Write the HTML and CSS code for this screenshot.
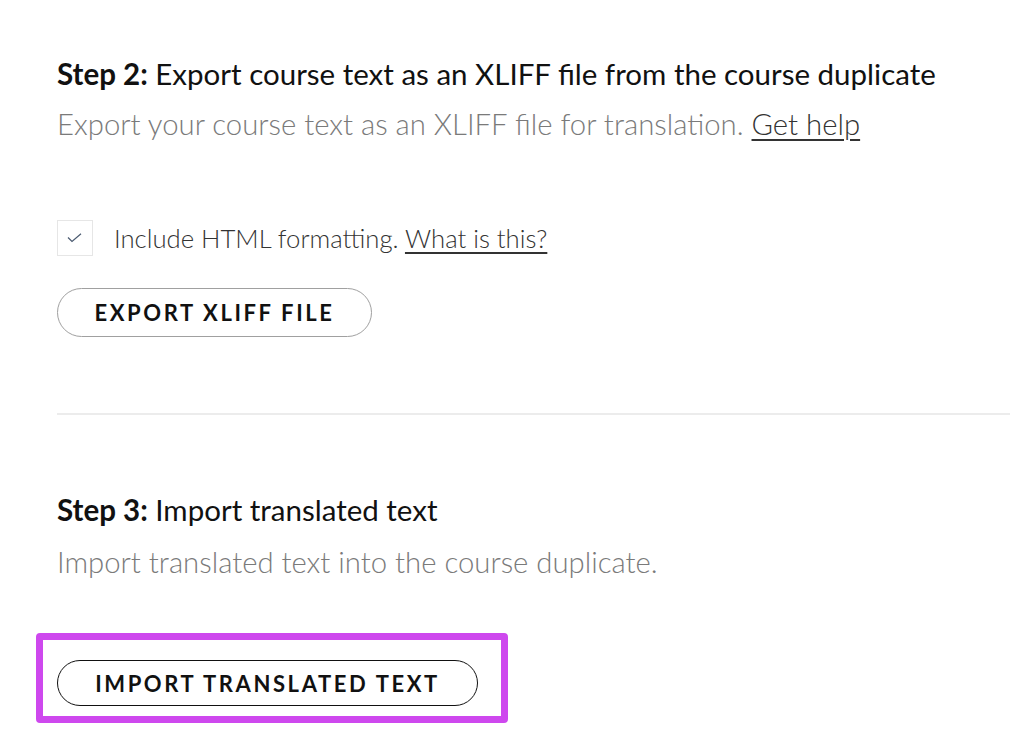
FILE: index.html
```html
<!DOCTYPE html>
<html>
<head>
    <link rel="stylesheet" href="styles.css">
</head>
<body>
    <div class="page">
        <section class="step">
            <h2 class="step-title"><strong>Step 2:</strong> Export course text as an XLIFF file from the course duplicate</h2>
            <p class="step-desc">Export your course text as an XLIFF file for translation. <a href="#" class="help-link">Get help</a></p>

            <label class="check-row">
                <span class="check-box">
                    <svg width="16" height="10" viewBox="0 0 16 10">
                        <polyline points="1,4.5 5,8.5 14,0.8" fill="none" stroke="#4a5a70" stroke-width="1.2"/>
                    </svg>
                </span>
                <span class="check-label">Include HTML formatting. <a href="#" class="help-link">What is this?</a></span>
            </label>

            <button class="pill-btn pill-btn-light">EXPORT XLIFF FILE</button>
        </section>

        <hr class="divider">

        <section class="step step-import">
            <h2 class="step-title"><strong>Step 3:</strong> Import translated text</h2>
            <p class="step-desc">Import translated text into the course duplicate.</p>

            <div class="highlight">
                <button class="pill-btn pill-btn-dark">IMPORT TRANSLATED TEXT</button>
            </div>
        </section>
    </div>
</body>
</html>
```

FILE: styles.css
```css
body {
    margin: 0;
    background: #ffffff;
    font-family: Lato, "Open Sans", sans-serif;
    color: #111;
}

.page {
    padding: 55px 0 0 57px;
}

.step-title {
    margin: 0;
    font-size: 29.5px;
    font-weight: 400;
    line-height: 38px;
    color: #111;
}

.step-title strong {
    font-weight: 700;
}

.step-desc {
    margin: 12px 0 0;
    font-size: 29.3px;
    font-weight: 300;
    line-height: 38px;
    color: #7a7a7a;
}

.help-link {
    color: #333;
    text-decoration: underline;
    text-decoration-thickness: 2px;
    text-underline-offset: 4px;
}

.check-row {
    display: flex;
    align-items: center;
    gap: 21px;
    margin-top: 77px;
}

.check-box {
    width: 34px;
    height: 34px;
    border: 1px solid #e6e6e6;
    display: flex;
    align-items: center;
    justify-content: center;
}

.check-label {
    font-size: 25.7px;
    font-weight: 300;
    color: #333;
}

.pill-btn {
    display: block;
    font-family: Lato, "Open Sans", sans-serif;
    font-size: 22px;
    font-weight: 700;
    letter-spacing: 2.6px;
    color: #111;
    background: #fff;
    border-radius: 30px;
    cursor: pointer;
}

.pill-btn-light {
    margin-top: 32px;
    width: 315px;
    height: 49px;
    border: 1px solid #a0a0a0;
}

.pill-btn-dark {
    width: 421px;
    height: 46px;
    border: 1px solid #111;
}

.divider {
    margin: 76px 0 0;
    border: none;
    height: 2px;
    background: #ececec;
}

.step-import {
    margin-top: 76px;
}

.step-import .step-desc {
    margin-top: 14px;
}

.highlight {
    display: inline-block;
    margin: 52px 0 0 -21px;
    padding: 20px 23px 10px 14px;
    border: 7px solid #ce48ee;
    border-radius: 4px;
}
```
